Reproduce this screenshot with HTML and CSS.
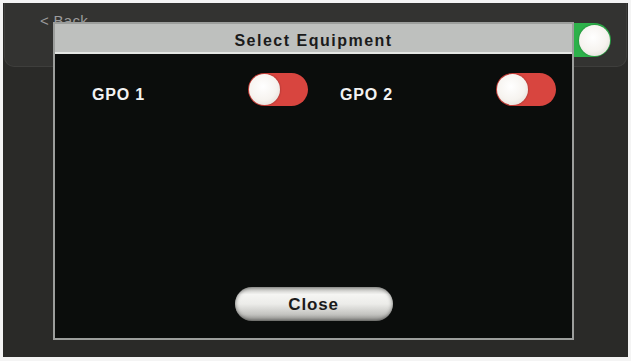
FILE: index.html
```html
<!DOCTYPE html>
<html>
<head>
<meta charset="utf-8">
<link rel="stylesheet" href="styles.css">
</head>
<body>
<div class="screen">
  <div class="topbar">
    <span class="back">&lt; Back</span>
    <span class="toggle toggle-on"><span class="knob"></span></span>
  </div>
  <div class="dialog">
    <div class="dialog-header">Select Equipment</div>
    <div class="dialog-body">
      <div class="items">
        <div class="item">
          <span class="label">GPO 1</span>
          <span class="toggle toggle-off"><span class="knob"></span></span>
        </div>
        <div class="item">
          <span class="label">GPO 2</span>
          <span class="toggle toggle-off"><span class="knob"></span></span>
        </div>
      </div>
      <button class="close-btn">Close</button>
    </div>
  </div>
</div>
</body>
</html>
```
FILE: styles.css
```css
html, body {
  margin: 0;
  padding: 0;
  background: #f4f4f4;
}
body {
  width: 631px;
  height: 361px;
  overflow: hidden;
  font-family: "Liberation Sans", Arial, sans-serif;
}
.screen {
  position: relative;
  margin: 3px 3px 0 3px;
  width: 625px;
  height: 354px;
  background: #2a2a28;
  box-sizing: border-box;
  padding: 0 1px;
}
.topbar {
  height: 64px;
  box-sizing: border-box;
  background: #333331;
  border: 1px solid #3e3e3c;
  border-top: none;
  border-radius: 0 0 10px 10px;
  display: flex;
  align-items: flex-start;
  justify-content: space-between;
  padding: 8px 15px 0 35px;
}
.back {
  color: #9c9c9c;
  font-size: 15px;
  line-height: 18px;
  margin-top: 1px;
  letter-spacing: 0.3px;
}
.toggle {
  display: flex;
  align-items: center;
  width: 60px;
  height: 33px;
  border-radius: 17px;
  box-sizing: border-box;
  padding: 1px;
}
.toggle-on {
  background: #2db14a;
  justify-content: flex-end;
  margin-top: 12px;
  height: 34px;
}
.toggle-off {
  background: #d8453f;
  justify-content: flex-start;
}
.knob {
  width: 31px;
  height: 31px;
  border-radius: 50%;
  background: radial-gradient(circle at 45% 40%, #ffffff 0%, #f6f3ef 55%, #d9d3cd 100%);
  box-shadow: 0 0 2px rgba(0,0,0,0.4);
}
.dialog {
  position: absolute;
  left: 50px;
  top: 19px;
  width: 521px;
  height: 318px;
  box-sizing: border-box;
  border: 2px solid #9c9e9c;
  background: #0b0d0c;
  display: flex;
  flex-direction: column;
}
.dialog-header {
  height: 30px;
  box-sizing: border-box;
  background: #bec0be;
  border-bottom: 2px solid #e4e6e4;
  color: #1b1b1b;
  font-weight: bold;
  font-size: 16px;
  letter-spacing: 1.5px;
  text-align: center;
  line-height: 30px;
  padding-top: 2px;
}
.dialog-body {
  flex: 1;
  display: flex;
  flex-direction: column;
  align-items: center;
  padding: 19px 0 17px 0;
}
.items {
  align-self: stretch;
  display: grid;
  grid-template-columns: 216px 216px;
  column-gap: 32px;
  padding-left: 37px;
}
.item {
  display: flex;
  align-items: center;
  justify-content: space-between;
}
.label {
  color: #f2f2f2;
  font-weight: bold;
  font-size: 16px;
  letter-spacing: 0.8px;
  padding-top: 10px;
}
.close-btn {
  margin-top: auto;
  width: 158px;
  height: 34px;
  border-radius: 17px;
  border: none;
  background: linear-gradient(to bottom, #b9b9b6 0%, #f5f5f3 22%, #ecece9 50%, #c4c4c1 80%, #8e8e8b 100%);
  box-shadow: inset 0 0 4px rgba(0,0,0,0.55);
  font-family: "Liberation Sans", Arial, sans-serif;
  font-weight: bold;
  font-size: 17px;
  letter-spacing: 0.8px;
  color: #1a1a1a;
  padding: 2px 0 0 0;
}
```
